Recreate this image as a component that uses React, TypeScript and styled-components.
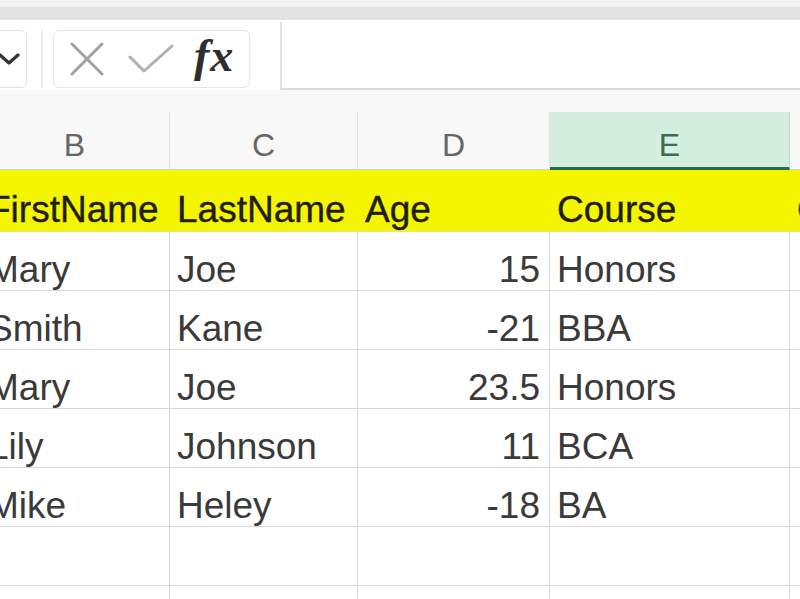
import React from "react";
import styled, { createGlobalStyle, css } from "styled-components";

const Global = createGlobalStyle`
  html, body { margin: 0; padding: 0; background: #ffffff; }
  body { width: 800px; height: 599px; overflow: hidden; font-family: "Liberation Sans", Arial, sans-serif; }
  #root { width: 800px; height: 599px; overflow: hidden; }
`;

const Page = styled.div`
  width: 800px;
  height: 599px;
  overflow: hidden;
  background: #ffffff;
  display: flex;
  flex-direction: column;
`;

const TopStrip = styled.div`
  height: 7px;
  background: #f3f3f3;
  flex: none;
`;

const TopBand = styled.div`
  height: 13px;
  background: #e3e3e3;
  flex: none;
`;

const FormulaBar = styled.div`
  height: 70px;
  box-sizing: border-box;
  padding-top: 10px;
  display: flex;
  align-items: flex-start;
  flex: none;
  background: #ffffff;
`;

const NameBox = styled.div`
  margin-left: -40px;
  width: 67px;
  height: 58px;
  box-sizing: border-box;
  border: 1px solid #e2e2e2;
  border-radius: 6px;
  display: flex;
  align-items: center;
  justify-content: flex-end;
  padding-right: 6px;
`;

const Splitter = styled.div`
  margin-left: 14px;
  width: 2px;
  height: 58px;
  background: #eeeeee;
`;

const ActionGroup = styled.div`
  margin-left: 10px;
  width: 197px;
  height: 58px;
  box-sizing: border-box;
  border: 1px solid #e6e6e6;
  border-radius: 6px;
  display: flex;
  align-items: center;
  padding-left: 16px;
  gap: 24px;
`;

const Fx = styled.span`
  font-family: "Liberation Serif", "Times New Roman", serif;
  font-style: italic;
  font-weight: bold;
  font-size: 46px;
  line-height: 1;
  color: #2e2e2e;
  margin-left: -4px;
  margin-top: -6px;
  letter-spacing: 1px;
`;

const FormulaInput = styled.div`
  margin-left: 30px;
  margin-top: -8px;
  flex: 1;
  height: 68px;
  box-sizing: border-box;
  border-left: 2px solid #e2e2e2;
  border-bottom: 2px solid #dadada;
`;

const HeaderGap = styled.div`
  height: 22px;
  background: #f8f8f8;
  flex: none;
`;

const Sheet = styled.div`
  margin-left: -20px;
  display: grid;
  grid-template-columns: 190px 188px 192px 240px 1fr;
  grid-template-rows: 58px 62px repeat(7, 59px);
`;

const ColHeader = styled.div<{ $active?: boolean }>`
  box-sizing: border-box;
  display: flex;
  align-items: center;
  justify-content: center;
  font-family: "Liberation Sans", Arial, sans-serif;
  font-size: 32px;
  color: #666666;
  background: #f8f8f8;
  border-right: 1px solid #e0e0e0;
  border-bottom: 1px solid #d4d4d4;
  padding-top: 10px;
  ${(p) =>
    p.$active &&
    css`
      background: #d4efdf;
      color: #3f6a54;
      border-right: 1px solid #c7d9cf;
      border-bottom: 3px solid #1f7244;
      padding-top: 12px;
    `}
`;

const Cell = styled.div<{ $num?: boolean; $head?: boolean }>`
  box-sizing: border-box;
  display: flex;
  align-items: flex-end;
  justify-content: ${(p) => (p.$num ? "flex-end" : "flex-start")};
  padding: 0 ${(p) => (p.$num ? "9px" : "7px")} 2px 7px;
  font-family: "Liberation Sans", Arial, sans-serif;
  font-size: 37px;
  line-height: 37px;
  white-space: nowrap;
  overflow: hidden;
  color: #3a3a3a;
  background: #ffffff;
  border-right: 1px solid #d8d8d8;
  border-bottom: 1px solid #d8d8d8;
  ${(p) =>
    p.$head &&
    css`
      background: #f5f500;
      color: #1e1e05;
      border-right: none;
      border-bottom: 1px solid #e2e2a0;
      padding-bottom: 3px;
      -webkit-text-stroke: 0.4px #1e1e05;
    `}
`;

const FirstCell = styled(Cell)`
  padding-left: 8px;
`;

const XIcon = () => (
  <svg width="34" height="34" viewBox="0 0 34 34">
    <path d="M2 2 L32 32 M32 2 L2 32" stroke="#a2a2a2" strokeWidth="3" fill="none" strokeLinecap="round" />
  </svg>
);

const CheckIcon = () => (
  <svg width="46" height="30" viewBox="0 0 46 30">
    <path d="M2 13 L16 27 L44 2" stroke="#b0b0b0" strokeWidth="3" fill="none" strokeLinecap="round" strokeLinejoin="round" />
  </svg>
);

const Chevron = () => (
  <svg width="22" height="14" viewBox="0 0 22 14">
    <path d="M2 3 L11 11 L20 3" stroke="#333333" strokeWidth="3.2" fill="none" strokeLinecap="round" strokeLinejoin="round" />
  </svg>
);

type Row = [string, string, string, string, string];

const headers: Row = ["FirstName", "LastName", "Age", "Course", "Grade"];
const rows: Row[] = [
  ["Mary", "Joe", "15", "Honors", ""],
  ["Smith", "Kane", "-21", "BBA", ""],
  ["Mary", "Joe", "23.5", "Honors", ""],
  ["Lily", "Johnson", "11", "BCA", ""],
  ["Mike", "Heley", "-18", "BA", ""],
  ["", "", "", "", ""],
  ["", "", "", "", ""],
];

const letters = ["B", "C", "D", "E", ""];

export default function App() {
  return (
    <>
      <Global />
      <Page>
        <TopStrip />
        <TopBand />
        <FormulaBar>
          <NameBox>
            <Chevron />
          </NameBox>
          <Splitter />
          <ActionGroup>
            <XIcon />
            <CheckIcon />
            <Fx>fx</Fx>
          </ActionGroup>
          <FormulaInput />
        </FormulaBar>
        <HeaderGap />
        <Sheet>
          {letters.map((l, i) => (
            <ColHeader key={"h" + i} $active={l === "E"}>
              {l}
            </ColHeader>
          ))}
          {headers.map((h, i) =>
            i === 0 ? (
              <FirstCell key={"y" + i} $head>
                {h}
              </FirstCell>
            ) : (
              <Cell key={"y" + i} $head>
                {h}
              </Cell>
            )
          )}
          {rows.map((r, ri) =>
            r.map((v, ci) =>
              ci === 0 ? (
                <FirstCell key={ri + "-" + ci}>{v}</FirstCell>
              ) : (
                <Cell key={ri + "-" + ci} $num={ci === 2}>
                  {v}
                </Cell>
              )
            )
          )}
        </Sheet>
      </Page>
    </>
  );
}
